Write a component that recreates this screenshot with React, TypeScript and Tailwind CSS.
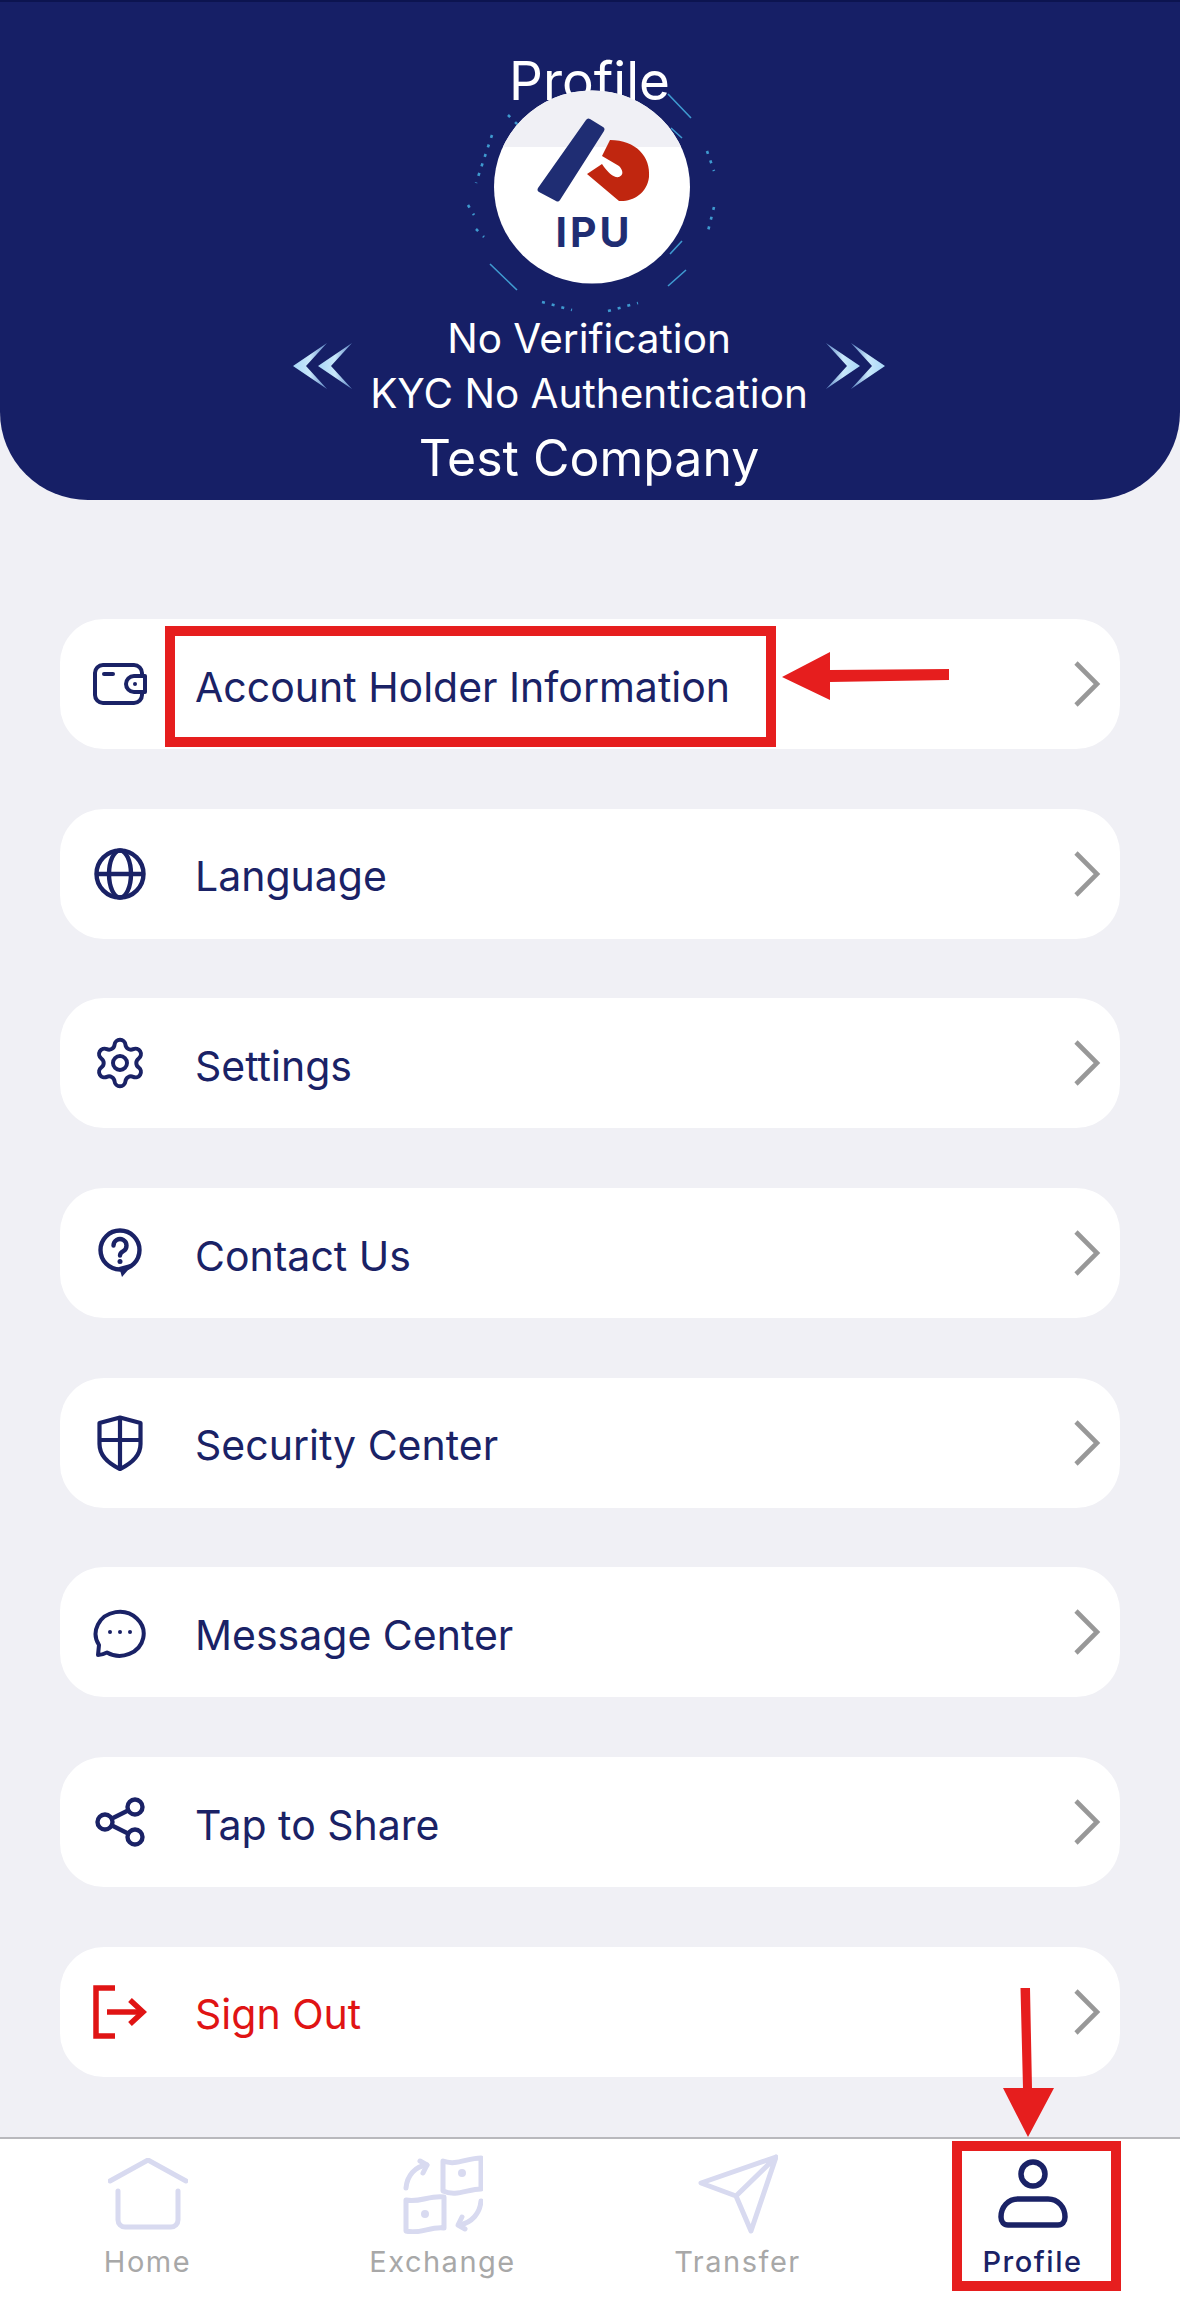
import React from "react";

const NAVY = "#1a2266";
const stroke = { fill: "none", stroke: NAVY, strokeWidth: 3.6, strokeLinecap: "round" as const, strokeLinejoin: "round" as const };

const Wallet = () => (
  <svg width="56" height="44" viewBox="0 0 56 44" {...stroke} strokeWidth={4}>
    <path d="M50 14V11a8 8 0 0 0-8-8H11a8 8 0 0 0-8 8v22a8 8 0 0 0 8 8h31a8 8 0 0 0 8-8v-3" />
    <path d="M12 12h9" />
    <path d="M53 14H42a8 8 0 0 0 0 16h11z" />
    <circle cx="43" cy="22" r="2" fill={NAVY} stroke="none" />
  </svg>
);
const Globe = () => (
  <svg width="54" height="54" viewBox="0 0 54 54" {...stroke} strokeWidth={4.4}>
    <circle cx="27" cy="27" r="23.5" />
    <ellipse cx="27" cy="27" rx="11" ry="23.5" />
    <path d="M4 27h46" />
  </svg>
);
const Gear = () => (
  <svg width="56" height="56" viewBox="0 0 24 24" {...stroke} strokeWidth={1.7}>
    <path d="M9.671 4.136a2.34 2.34 0 0 1 4.659 0 2.34 2.34 0 0 0 3.319 1.915 2.34 2.34 0 0 1 2.33 4.033 2.34 2.34 0 0 0 0 3.831 2.34 2.34 0 0 1-2.33 4.033 2.34 2.34 0 0 0-3.319 1.915 2.34 2.34 0 0 1-4.659 0 2.34 2.34 0 0 0-3.32-1.915 2.34 2.34 0 0 1-2.33-4.033 2.34 2.34 0 0 0 0-3.831A2.34 2.34 0 0 1 6.35 6.051a2.34 2.34 0 0 0 3.319-1.915" />
    <circle cx="12" cy="12" r="3" />
  </svg>
);
const Contact = () => (
  <svg width="44" height="50" viewBox="0 0 44 50" fill="none" stroke={NAVY} strokeWidth={4.4} strokeLinecap="round">
    <circle cx="22" cy="22" r="19.500" />
    <path d="M21 39 24 49 36 35z" fill={NAVY} stroke="none" />
    <path d="M15.500 17.500a6.500 6.500 0 1 1 9.800 5.600c-2.200 1.300-3.300 2.300-3.300 4.400" />
    <circle cx="22" cy="33.500" r="2.500" fill={NAVY} stroke="none" />
  </svg>
);
const Shield = () => (
  <svg width="46" height="56" viewBox="0 0 46 56" {...stroke} strokeWidth={4.2}>
    <path d="M23 2.500 43.500 8v21c0 11-8 19-20.500 25C10.500 48 2.500 40 2.500 29V8z" />
    <path d="M23 3v50M3 25h40" />
  </svg>
);
const Chat = () => (
  <svg width="54" height="52" viewBox="0 0 54 52" {...stroke} strokeWidth={4}>
    <path d="M5 49l1-10A24 22 0 1 1 14 46.500 C11 48 8 49 5 49z" />
    <circle cx="17" cy="26" r="2" fill={NAVY} stroke="none" />
    <circle cx="27" cy="26" r="2" fill={NAVY} stroke="none" />
    <circle cx="37" cy="26" r="2" fill={NAVY} stroke="none" />
  </svg>
);
const Share = () => (
  <svg width="52" height="50" viewBox="0 0 52 50" {...stroke} strokeWidth={4.4}>
    <circle cx="41" cy="10" r="7.500" />
    <circle cx="11" cy="25" r="7.500" />
    <circle cx="41" cy="40" r="7.500" />
    <path d="M18 21.500 34 13.500M18 28.500l16 8" />
  </svg>
);
const SignOut = () => (
  <svg width="54" height="54" viewBox="0 0 54 54" fill="none" stroke="#e01414" strokeWidth="5.500" strokeLinejoin="miter">
    <path d="M22 3H3v48h19" />
    <path d="M14 27h35" />
    <path d="M37 15l13 12-13 12" />
  </svg>
);
const Chevron = () => (
  <svg width="28" height="48" viewBox="0 0 28 48" fill="none" stroke="#989898" strokeWidth="4.600">
    <path d="M3 3l21 21L3 45" />
  </svg>
);

const rows: { label: string; icon: React.ReactNode; red?: boolean }[] = [
  { label: "Account Holder Information", icon: <Wallet /> },
  { label: "Language", icon: <Globe /> },
  { label: "Settings", icon: <Gear /> },
  { label: "Contact Us", icon: <Contact /> },
  { label: "Security Center", icon: <Shield /> },
  { label: "Message Center", icon: <Chat /> },
  { label: "Tap to Share", icon: <Share /> },
  { label: "Sign Out", icon: <SignOut />, red: true },
];

const Logo = () => (
  <svg width="198" height="194" viewBox="-99 -97 198 194" className="overflow-visible relative z-10">
    <defs>
      <clipPath id="logoCircle"><ellipse cx="0" cy="0" rx="98" ry="96.500" /></clipPath>
    </defs>
    <g stroke="#3f9ad0" strokeWidth="1.600" fill="none">
      <path d="M76-93 99-69M79-59 90-49M-102 77-75 103M76 99 94 83M78 67 90 54" />
      <g strokeWidth="2.600" strokeDasharray="3 7">
        <path d="M-100-52-116-4" />
        <path d="M-124 18-118 28" />
        <path d="M-116 42-108 50" />
        <path d="M115-36 122-16" />
        <path d="M122 20 116 44" />
        <path d="M-50 115-20 123" />
        <path d="M16 124 46 116" />
        <path d="M-84-72-72-60" />
      </g>
    </g>
    <g clipPath="url(#logoCircle)">
      <rect x="-100" y="-100" width="200" height="200" fill="#ffffff" />
      <rect x="-100" y="-100" width="200" height="60" fill="#f0f0f5" />
    </g>
    <path d="M-6-67a3 3 0 0 1 4-1L11-60a3 3 0 0 1 1 4L-32 13a3 3 0 0 1-4 1L-53 5a3 3 0 0 1-1-4z" fill="#1f2d73" />
    <path d="M18-47 C44-47 59-30 57-10 C55 7 40 15 27 14 L-5-13 L10-23 C16-14 22-9 27-10 C32-12 31-17 27-21 L10-31z" fill="#c0260f" />
    <text x="2" y="60" textAnchor="middle" fontFamily="Inter, sans-serif" fontWeight="700" fontSize="41" letterSpacing="3" fill="#1f2d73">IPU</text>
  </svg>
);

const DoubleChevron = ({ flip }: { flip?: boolean }) => (
  <svg width="60" height="46" viewBox="0 0 60 46" className={flip ? "-scale-x-100" : ""}>
    <defs>
      <linearGradient id={flip ? "gr" : "gl"} x1="0" x2="1" y1="0" y2="0">
        <stop offset="0" stopColor="#a9d8f8" />
        <stop offset="0.5" stopColor="#c9e8fb" />
        <stop offset="1" stopColor="#5b84c4" />
      </linearGradient>
    </defs>
    <path d="M0 23 34 0 13 23 34 46z" fill={`url(#${flip ? "gr" : "gl"})`} />
    <path d="M25 23 59 0 38 23 59 46z" fill={`url(#${flip ? "gr" : "gl"})`} />
  </svg>
);

const HomeIcon = () => (
  <svg width="80" height="72" viewBox="0 0 80 72" fill="none" stroke="#d8daf0" strokeWidth="5" strokeLinecap="round" strokeLinejoin="round">
    <path d="M2 23 40 2l38 21" />
    <path d="M10 33v29a7 7 0 0 0 7 7h46a7 7 0 0 0 7-7V33" />
  </svg>
);
const ExchangeIcon = () => (
  <svg width="80" height="80" viewBox="0 0 80 80" fill="none" stroke="#d8daf0" strokeWidth="5" strokeLinecap="round" strokeLinejoin="round">
    <path d="M40 7c13 5 24-3 38-3v31c-13 0-25 8-38 2z" />
    <path d="M3 46c13 3 24-5 38-3v31c-13-2-25 7-38 3z" />
    <path d="M3 34C4 22 12 12 24 11" />
    <path d="M17 7l7 4-4 8" />
    <path d="M78 47c-1 12-9 22-22 24" />
    <path d="M62 75l-7-4 4-8" />
    <circle cx="59" cy="19" r="1.500" fill="#d8daf0" />
    <circle cx="22" cy="60" r="1.500" fill="#d8daf0" />
  </svg>
);
const TransferIcon = () => (
  <svg width="80" height="80" viewBox="0 0 80 80" fill="none" stroke="#d8daf0" strokeWidth="5" strokeLinecap="round" strokeLinejoin="round">
    <path d="M78 3 3 29l35 13 15 35zM78 3 38 42" />
  </svg>
);
const ProfileIcon = () => (
  <svg width="70" height="70" viewBox="0 0 70 70" fill="none" stroke={NAVY} strokeWidth="5.500">
    <circle cx="35" cy="15" r="12" />
    <path d="M20 40h30c10 0 17 8 17 18 0 5-3 8-7 8H10c-4 0-7-3-7-8 0-10 7-18 17-18z" />
  </svg>
);

const nav = [
  { label: "Home", icon: <HomeIcon /> },
  { label: "Exchange", icon: <ExchangeIcon /> },
  { label: "Transfer", icon: <TransferIcon /> },
  { label: "Profile", icon: <ProfileIcon />, active: true },
];

export default function App() {
  return (
    <div className="relative w-[1180px] h-[2300px] bg-[#f0f0f5] flex flex-col overflow-hidden font-['Inter',sans-serif]">
      <header className="h-[500px] shrink-0 bg-[#161f66] border-t-2 border-[#0c1450] rounded-b-[88px] flex flex-col items-center pt-[49px] text-white">
        <h1 className="text-[53px] leading-[60px] font-normal -ml-[1px]">Profile</h1>
        <div className="-mt-[21px] ml-[4px]">
          <Logo />
        </div>
        <div className="mt-[27px] flex items-center gap-[17px] -ml-[2px]">
          <DoubleChevron />
          <div className="text-center text-[40.500px] leading-[55px] w-[438px] whitespace-nowrap">
            <div>No Verification</div>
            <div>KYC No Authentication</div>
          </div>
          <DoubleChevron flip />
        </div>
        <div className="mt-[8px] text-[50px] leading-[58px] -ml-[2px]">Test Company</div>
      </header>

      <main className="mt-[119px] ml-[60px] mr-[60px] flex flex-col gap-[59.7px]">
        {rows.map((r) => (
          <div key={r.label} className="h-[130px] bg-white rounded-[44px] flex items-center pr-[19px]">
            <div className="w-[120px] flex items-center justify-center shrink-0">{r.icon}</div>
            <span className={`ml-[15px] pt-[5px] flex-1 text-[41px] leading-[50px] ${r.red ? "text-[#e01414]" : "text-[#1a2266]"}`}>{r.label}</span>
            <Chevron />
          </div>
        ))}
      </main>

      <nav className="mt-auto h-[163px] bg-white border-t-2 border-[#b9b9bd] grid grid-cols-4 pt-[15px]">
        {nav.map((n) => (
          <div key={n.label} className="flex flex-col items-center">
            <div className="h-[80px] flex items-center justify-center">{n.icon}</div>
            <span className={`mt-[10px] text-[29px] leading-[36px] tracking-[1.5px] ${n.active ? "text-[#1a2266] font-medium" : "text-[#a8a8a8]"}`}>{n.label}</span>
          </div>
        ))}
      </nav>

      {/* red annotations */}
      <div className="absolute left-[165px] top-[626px] w-[611px] h-[121px] border-[10px] border-[#e61e1e]" />
      <div className="absolute left-[952px] top-[2141px] w-[169px] h-[150px] border-[10px] border-[#e61e1e]" />
      <svg className="absolute left-[770px] top-[640px]" width="190" height="70" viewBox="770 640 190 70">
        <path d="M782 677 830 652v18l119-1v11l-119 2v18z" fill="#e61e1e" />
      </svg>
      <svg className="absolute left-[990px] top-[1980px]" width="70" height="165" viewBox="990 1980 70 165">
        <path d="M1020.500 1988h9.500l2 100h22l-26 49-25-49h20z" fill="#e61e1e" />
      </svg>
    </div>
  );
}
